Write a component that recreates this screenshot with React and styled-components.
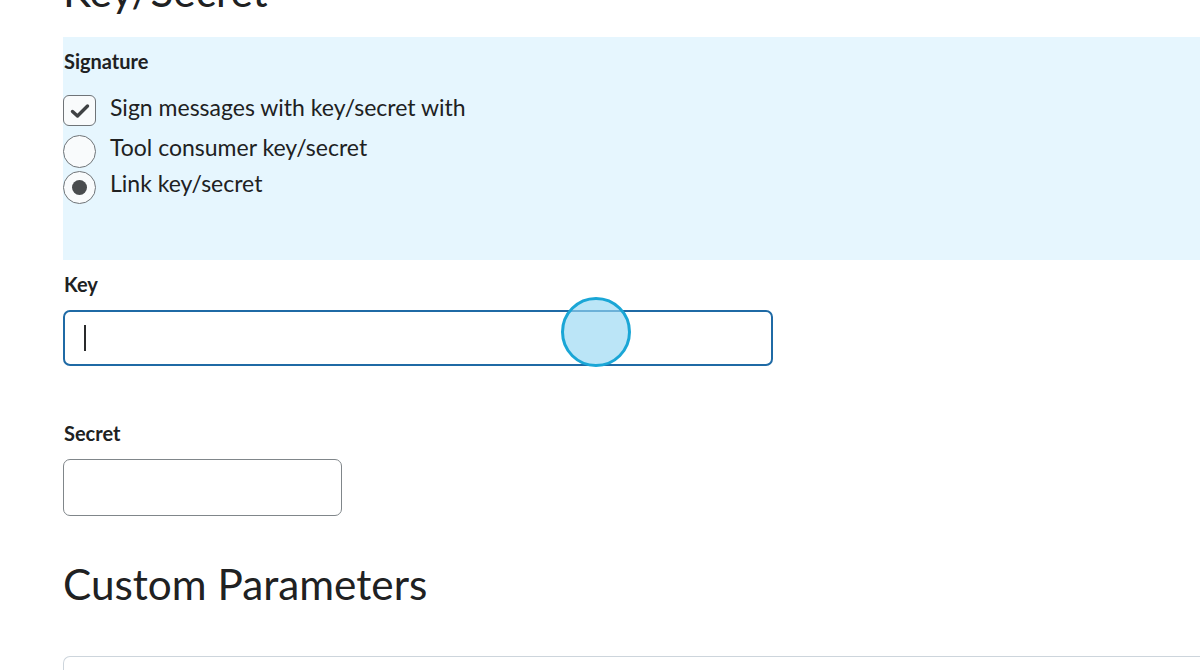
import React from "react";
import styled, { createGlobalStyle } from "styled-components";

const Global = createGlobalStyle`
  html, body { margin: 0; padding: 0; background: #ffffff; }
  body { overflow: hidden; font-family: Lato, "Noto Sans", sans-serif; color: #202122; }
`;

const Page = styled.div`
  width: 1200px;
  height: 670px;
  overflow: hidden;
  padding-left: 63px;
  box-sizing: border-box;
`;

const Heading = styled.h2`
  margin: ${(p) => p.$mt}px 0 0 0;
  font-family: Lato, "Noto Sans", sans-serif;
  font-weight: 400;
  font-size: 42.3px;
  line-height: 50px;
  color: #202122;
  white-space: nowrap;
`;

const Panel = styled.fieldset`
  margin: 0;
  margin-top: 21px;
  border: none;
  padding: 12px 0 56px 0;
  background: #e6f6fe;
  display: flex;
  flex-direction: column;
`;

const Label = styled.div`
  font-weight: 700;
  font-size: 20px;
  line-height: 24px;
  padding-left: 1px;
  margin-top: ${(p) => p.$mt || 0}px;
`;

const Options = styled.div`
  display: flex;
  flex-direction: column;
  margin-top: 22px;
`;

const OptionRow = styled.label`
  display: flex;
  align-items: flex-start;
  gap: 14px;
  margin-bottom: ${(p) => p.$mb || 0}px;
`;

const OptionText = styled.span`
  font-size: 23px;
  line-height: 25px;
  color: #202122;
`;

const CheckBox = styled.span`
  box-sizing: border-box;
  width: 33px;
  height: 31px;
  border: 1px solid #6f7478;
  border-radius: 6px;
  background: #f9fbfc;
  display: flex;
  align-items: center;
  justify-content: center;
  flex: none;
`;

const Radio = styled.span`
  box-sizing: border-box;
  width: 33px;
  height: 33px;
  border: 1px solid #6f7478;
  border-radius: 50%;
  background: #f9fbfc;
  display: flex;
  align-items: center;
  justify-content: center;
  flex: none;
  &::after {
    content: "";
    display: ${(p) => (p.$checked ? "block" : "none")};
    width: 15px;
    height: 15px;
    border-radius: 50%;
    background: #494c4e;
  }
`;

const InputBox = styled.div`
  position: relative;
  box-sizing: border-box;
  margin-top: 14px;
  width: ${(p) => p.$w}px;
  height: ${(p) => p.$h}px;
  border: ${(p) => (p.$focused ? "2px solid #1f6aa5" : "1px solid #80868a")};
  border-radius: 7px;
  background: #fff;
  display: flex;
  align-items: center;
  padding-left: ${(p) => (p.$focused ? 19 : 20)}px;
`;

const Caret = styled.span`
  width: 1.5px;
  height: 26px;
  background: #2a2b2c;
`;

const Touch = styled.span`
  position: absolute;
  left: 496px;
  top: -15px;
  width: 70px;
  height: 70px;
  box-sizing: border-box;
  border-radius: 50%;
  border: 3px solid #1aa6d6;
  background: rgba(150, 215, 242, 0.65);
`;

const TableTop = styled.div`
  margin-top: 47px;
  height: 40px;
  border: 1px solid #cdd5dc;
  border-right: none;
  border-radius: 7px 0 0 0;
`;

const Check = () => (
  <svg width="22" height="18" viewBox="0 0 22 18" fill="none">
    <path d="M3.5 9.5 L8.5 14 L18.5 4" stroke="#3f4244" strokeWidth="3.4" strokeLinecap="round" strokeLinejoin="round" />
  </svg>
);

export default function App() {
  return (
    <>
      <Global />
      <Page>
        <Heading $mt={-34}>Key/Secret</Heading>
        <Panel>
          <Label>Signature</Label>
          <Options>
            <OptionRow $mb={9}>
              <CheckBox><Check /></CheckBox>
              <OptionText>Sign messages with key/secret with</OptionText>
            </OptionRow>
            <OptionRow $mb={3}>
              <Radio />
              <OptionText>Tool consumer key/secret</OptionText>
            </OptionRow>
            <OptionRow>
              <Radio $checked />
              <OptionText>Link key/secret</OptionText>
            </OptionRow>
          </Options>
        </Panel>
        <Label $mt={12}>Key</Label>
        <InputBox $w={710} $h={56} $focused>
          <Caret />
          <Touch />
        </InputBox>
        <Label $mt={55}>Secret</Label>
        <InputBox $w={279} $h={57} />
        <Heading $mt={43}>Custom Parameters</Heading>
        <TableTop />
      </Page>
    </>
  );
}
